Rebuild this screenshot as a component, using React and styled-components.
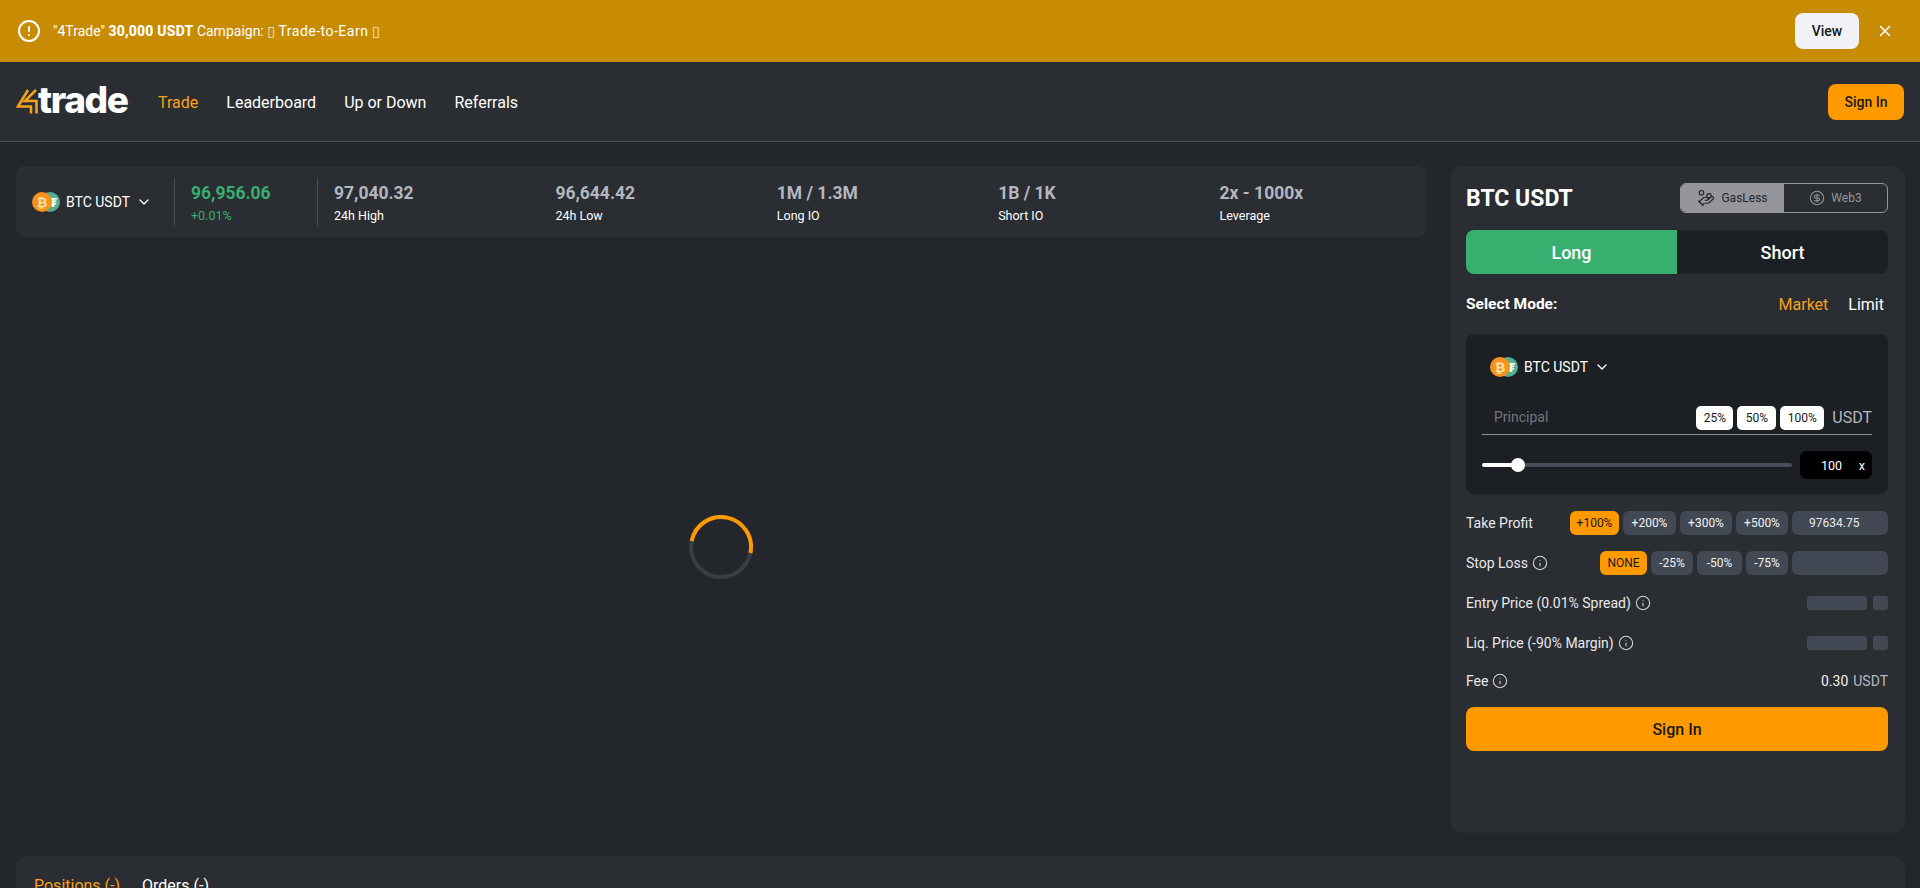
import React from "react";
import styled, { createGlobalStyle } from "styled-components";
import { CircleAlert, X, ChevronDown, Info, HandCoins, CircleDollarSign } from "lucide-react";

const FONT = `"Roboto", "Noto Sans", "DejaVu Sans", sans-serif`;

const Global = createGlobalStyle`
  html, body { margin: 0; padding: 0; height: 100%; background: #23262a; }
  body { font-family: ${FONT}; color: #fff; overflow: hidden; }
  * { box-sizing: border-box; }
`;

const Page = styled.div`
  width: 1920px;
  height: 888px;
  overflow: hidden;
  background: #23262a;
  display: flex;
  flex-direction: column;
`;

const Banner = styled.div`
  height: 62px;
  flex: none;
  background: #c88b04;
  display: flex;
  align-items: center;
  padding: 0 20px 0 17px;
`;
const BannerText = styled.div`
  margin-left: 12px;
  font-size: 14px;
  flex: 1;
  b { font-weight: 800; letter-spacing: 0.2px; }
`;
const Tofu = styled.span`
  font: 400 14px "DejaVu Sans", sans-serif;
  color: #f5e6c4;
`;
const CampaignWord = styled.span`
  letter-spacing: 0.5px;
`;
const ViewButton = styled.button`
  width: 64px;
  height: 36px;
  border: 0;
  border-radius: 8px;
  background: #f0f2f5;
  color: #15171b;
  font: 500 14px ${FONT};
`;
const CloseBtn = styled.span`
  display: flex;
  margin-left: 17px;
  margin-right: 6px;
  color: #fff;
`;

const Header = styled.header`
  height: 80px;
  flex: none;
  background: #2a2d32;
  border-bottom: 1px solid #4a4d54;
  display: flex;
  align-items: center;
  padding: 0 16px;
`;
const Logo = styled.div`
  display: flex;
  align-items: center;
  width: 142px;
`;
const LogoMark = styled.svg`
  flex: none;
`;
const LogoWord = styled.span`
  font: 800 37px/1 "Inter", sans-serif;
  letter-spacing: -1.4px;
  margin-left: -1px;
  color: #fff;
  transform: translateY(-2px);
`;
const Nav = styled.nav`
  display: flex;
  gap: 28px;
  flex: 1;
  padding-top: 2px;
`;
const NavLink = styled.a`
  font-size: 16px;
  color: ${p => (p.$active ? "#f7a11a" : "#fff")};
`;
const PrimarySmall = styled.button`
  width: 76px;
  height: 36px;
  margin-top: 1px;
  border: 0;
  border-radius: 8px;
  background: #ff9900;
  color: #17191d;
  font: 500 14px ${FONT};
`;

const Main = styled.main`
  flex: none;
  height: 691px;
  display: grid;
  grid-template-columns: 1410px 455px;
  gap: 24px;
  padding: 24px 15px 0 16px;
`;
const LeftColumn = styled.div`
  display: flex;
  flex-direction: column;
  min-height: 0;
`;
const StatBar = styled.section`
  height: 71px;
  flex: none;
  background: #2a2d32;
  border-radius: 8px;
  display: flex;
  align-items: center;
  padding: 0 16px;
`;
const Pair = styled.div`
  display: flex;
  align-items: center;
  gap: 6px;
  font-size: 14px;
  color: #fff;
`;
const PairGroup = styled.div`
  width: 142px;
  flex: none;
`;
const Divider = styled.div`
  width: 1px;
  height: 48px;
  background: #4a4d54;
  flex: none;
`;
const PriceBlock = styled.div`
  width: 142px;
  padding: 2px 0 0 16px;
  flex: none;
`;
const StatsGrid = styled.div`
  display: flex;
  flex: 1;
  padding: 2px 0 0 16px;
`;
const Stat = styled.div`
  width: 221.4px;
  flex: none;
`;
const StatValue = styled.div`
  font-size: 17.5px;
  line-height: 24px;
  font-weight: 700;
  color: ${p => (p.$green ? "#38ae6f" : "#b4b7c0")};
`;
const StatLabel = styled.div`
  font-size: 12.5px;
  line-height: 18px;
  margin-top: 2px;
  color: ${p => (p.$green ? "#38ae6f" : "#fff")};
`;
const ChartArea = styled.div`
  flex: 1;
  padding-top: 23px;
  display: flex;
  align-items: center;
  justify-content: center;
`;

const Panel = styled.aside`
  background: #2a2d32;
  border-radius: 12px;
  padding: 16px 17px 16px 16px;
  display: flex;
  flex-direction: column;
`;
const PanelHead = styled.div`
  display: flex;
  align-items: center;
  justify-content: space-between;
  height: 32px;
`;
const PanelTitle = styled.h2`
  margin: 0;
  font-size: 23px;
  font-weight: 700;
  color: #fff;
`;
const Toggle = styled.div`
  width: 208px;
  height: 30px;
  border: 1px solid #94969b;
  border-radius: 6px;
  display: grid;
  grid-template-columns: 103px 1fr;
  overflow: hidden;
`;
const ToggleItem = styled.div`
  display: flex;
  align-items: center;
  justify-content: center;
  gap: 6px;
  font-size: 12px;
  background: ${p => (p.$active ? "#94969b" : "transparent")};
  color: ${p => (p.$active ? "#24262b" : "#94969b")};
`;
const SideTabs = styled.div`
  margin-top: 16px;
  height: 44px;
  flex: none;
  display: grid;
  grid-template-columns: 1fr 1fr;
  border-radius: 8px;
  overflow: hidden;
  background: #1c1f24;
`;
const SideTab = styled.div`
  display: flex;
  align-items: center;
  justify-content: center;
  font-size: 18px;
  font-weight: 500;
  background: ${p => (p.$active ? "#38ae6f" : "transparent")};
`;
const ModeRow = styled.div`
  margin-top: 17px;
  height: 26px;
  display: flex;
  align-items: center;
  justify-content: space-between;
  padding-right: 4px;
`;
const ModeLabel = styled.div`
  font-size: 15.5px;
  font-weight: 700;
`;
const ModeOptions = styled.div`
  display: flex;
  gap: 20px;
`;
const ModeOption = styled.span`
  font-size: 16px;
  color: ${p => (p.$active ? "#f7a11a" : "#fff")};
`;
const InputCard = styled.div`
  margin-top: 17px;
  height: 160px;
  flex: none;
  background: #1c1f24;
  border-radius: 8px;
  padding: 23px 16px 0;
`;
const CardPair = styled(Pair)`
  padding-left: 8px;
  height: 20px;
`;
const PrincipalRow = styled.div`
  margin-top: 22px;
  height: 36px;
  border-bottom: 1px solid #8f9197;
  display: flex;
  align-items: flex-start;
  padding-top: 7px;
`;
const Placeholder = styled.div`
  flex: 1;
  font-size: 14px;
  line-height: 22px;
  padding-left: 12px;
  color: #74767c;
`;
const PercentButton = styled.button`
  height: 24px;
  width: ${p => p.$w}px;
  border: 0;
  padding: 0;
  margin-right: 4px;
  border-radius: 5px;
  background: #fff;
  color: #17191d;
  font: 400 12px ${FONT};
`;
const Unit = styled.span`
  font-size: 16px;
  line-height: 24px;
  margin-left: 4px;
  color: #b4b7c0;
`;
const SliderRow = styled.div`
  margin-top: 16px;
  display: flex;
  align-items: center;
  justify-content: space-between;
`;
const Track = styled.div`
  position: relative;
  width: 310px;
  height: 4px;
  border-radius: 2px;
  background: #4a4d5c;
`;
const TrackFill = styled.div`
  height: 100%;
  width: 36px;
  border-radius: 2px;
  background: #fff;
`;
const Thumb = styled.div`
  position: absolute;
  left: 29px;
  top: -5px;
  width: 14px;
  height: 14px;
  border-radius: 50%;
  background: #fff;
`;
const Leverage = styled.div`
  width: 72px;
  height: 28px;
  border-radius: 6px;
  background: #000;
  display: flex;
  align-items: center;
  justify-content: space-between;
  padding: 0 7px 0 21px;
  font-size: 12.5px;
`;
const FormRow = styled.div`
  height: 24px;
  margin-top: ${p => p.$mt ?? 16}px;
  display: flex;
  align-items: center;
  gap: 4px;
  font-size: 14px;
  color: #e8e9ec;
`;
const RowLabel = styled.span`
  flex: 1;
  display: flex;
  align-items: center;
  gap: 4px;
  svg { color: #d4d6da; }
`;
const ChoiceButton = styled.div`
  height: 24px;
  width: ${p => p.$w}px;
  border-radius: 6px;
  display: flex;
  align-items: center;
  justify-content: center;
  font-size: 12px;
  background: ${p => (p.$active ? "#ff9900" : "#434954")};
  color: ${p => (p.$active ? "#17191d" : "#f0f1f3")};
`;
const PriceInput = styled.div`
  width: 96px;
  height: 24px;
  border-radius: 6px;
  background: #434954;
  padding-left: 17px;
  font-size: 12px;
  line-height: 24px;
  color: #e8e9ec;
`;
const Skeleton = styled.div`
  width: ${p => p.$w}px;
  height: 14px;
  margin-left: 2px;
  border-radius: 3px;
  background: #434954;
`;
const FeeValue = styled.span`
  color: #f0f1f3;
  span { color: #b4b7c0; margin-left: 5px; }
`;
const SubmitButton = styled.button`
  margin-top: 14px;
  height: 44px;
  flex: none;
  border: 0;
  border-radius: 8px;
  background: #ff9900;
  color: #17191d;
  font: 500 16px ${FONT};
`;
const BottomPanel = styled.section`
  margin: 23px 15px 0 16px;
  height: 200px;
  flex: none;
  background: #2a2d32;
  border-radius: 12px 12px 0 0;
  padding: 20px 18px;
  display: flex;
  gap: 22px;
`;
const BottomTab = styled.span`
  font-size: 16px;
  line-height: 20px;
  color: ${p => (p.$active ? "#f7a11a" : "#fff")};
`;

const PairIcon = () => (
  <svg width="28" height="20" viewBox="0 0 28 20">
    <circle cx="18" cy="10" r="10" fill="#53ae94" />
    <text x="17" y="14.5" fontSize="13" fontWeight="700" fill="#fff" fontFamily="Roboto, sans-serif">₮</text>
    <circle cx="10" cy="10" r="10" fill="#f7931a" />
    <text x="10" y="14.5" textAnchor="middle" fontSize="13" fontWeight="700" fill="#ffe3b8" fontFamily="DejaVu Sans, sans-serif">₿</text>
  </svg>
);

const Spinner = () => (
  <svg width="64" height="64" viewBox="0 0 64 64">
    <circle cx="32" cy="32" r="30" fill="none" stroke="#3a3d44" strokeWidth="4" />
    <path d="M2.6 26 A30 30 0 0 1 61.4 38" fill="none" stroke="#ff9900" strokeWidth="4" />
  </svg>
);

const InfoIcon = () => <Info size={16} strokeWidth={1.6} />;

const stats = [
  ["97,040.32", "24h High"],
  ["96,644.42", "24h Low"],
  ["1M / 1.3M", "Long IO"],
  ["1B / 1K", "Short IO"],
  ["2x - 1000x", "Leverage"],
];

export default function App() {
  return (
    <Page>
      <Global />
      <Banner>
        <CircleAlert size={24} strokeWidth={2} color="#fff" />
        <BannerText>
          "4Trade" <b>30,000 USDT</b> Campaign: <Tofu>▯</Tofu> <CampaignWord>Trade-to-Earn</CampaignWord> <Tofu>▯</Tofu>
        </BannerText>
        <ViewButton>View</ViewButton>
        <CloseBtn><X size={18} strokeWidth={2} /></CloseBtn>
      </Banner>
      <Header>
        <Logo>
          <LogoMark width="23" height="25" viewBox="0 0 23 25">
            <path d="M12 1 L2 17.5 H15 V24.5" fill="none" stroke="#f7a11a" strokeWidth="2.6" />
            <path d="M20 1 L9 12 H20.5 V24.5" fill="none" stroke="#f7a11a" strokeWidth="2.6" />
          </LogoMark>
          <LogoWord>trade</LogoWord>
        </Logo>
        <Nav>
          <NavLink $active>Trade</NavLink>
          <NavLink>Leaderboard</NavLink>
          <NavLink>Up or Down</NavLink>
          <NavLink>Referrals</NavLink>
        </Nav>
        <PrimarySmall>Sign In</PrimarySmall>
      </Header>
      <Main>
        <LeftColumn>
          <StatBar>
            <PairGroup>
              <Pair><PairIcon /> BTC USDT <ChevronDown size={16} strokeWidth={2} /></Pair>
            </PairGroup>
            <Divider />
            <PriceBlock>
              <StatValue $green>96,956.06</StatValue>
              <StatLabel $green>+0.01%</StatLabel>
            </PriceBlock>
            <Divider />
            <StatsGrid>
              {stats.map(([v, l]) => (
                <Stat key={l}>
                  <StatValue>{v}</StatValue>
                  <StatLabel>{l}</StatLabel>
                </Stat>
              ))}
            </StatsGrid>
          </StatBar>
          <ChartArea><Spinner /></ChartArea>
        </LeftColumn>
        <Panel>
          <PanelHead>
            <PanelTitle>BTC USDT</PanelTitle>
            <Toggle>
              <ToggleItem $active><HandCoins size={18} strokeWidth={1.6} /> GasLess</ToggleItem>
              <ToggleItem><CircleDollarSign size={16} strokeWidth={1.6} /> Web3</ToggleItem>
            </Toggle>
          </PanelHead>
          <SideTabs>
            <SideTab $active>Long</SideTab>
            <SideTab>Short</SideTab>
          </SideTabs>
          <ModeRow>
            <ModeLabel>Select Mode:</ModeLabel>
            <ModeOptions>
              <ModeOption $active>Market</ModeOption>
              <ModeOption>Limit</ModeOption>
            </ModeOptions>
          </ModeRow>
          <InputCard>
            <CardPair><PairIcon /> BTC USDT <ChevronDown size={16} strokeWidth={2} /></CardPair>
            <PrincipalRow>
              <Placeholder>Principal</Placeholder>
              <PercentButton $w={37}>25%</PercentButton>
              <PercentButton $w={39}>50%</PercentButton>
              <PercentButton $w={44}>100%</PercentButton>
              <Unit>USDT</Unit>
            </PrincipalRow>
            <SliderRow>
              <Track><TrackFill /><Thumb /></Track>
              <Leverage><span>100</span><span>x</span></Leverage>
            </SliderRow>
          </InputCard>
          <FormRow $mt={17}>
            <RowLabel>Take Profit</RowLabel>
            <ChoiceButton $w={49} $active>+100%</ChoiceButton>
            <ChoiceButton $w={53}>+200%</ChoiceButton>
            <ChoiceButton $w={52}>+300%</ChoiceButton>
            <ChoiceButton $w={52}>+500%</ChoiceButton>
            <PriceInput>97634.75</PriceInput>
          </FormRow>
          <FormRow>
            <RowLabel>Stop Loss <InfoIcon /></RowLabel>
            <ChoiceButton $w={47} $active>NONE</ChoiceButton>
            <ChoiceButton $w={42}>-25%</ChoiceButton>
            <ChoiceButton $w={45}>-50%</ChoiceButton>
            <ChoiceButton $w={42}>-75%</ChoiceButton>
            <PriceInput />
          </FormRow>
          <FormRow>
            <RowLabel>Entry Price (0.01% Spread) <InfoIcon /></RowLabel>
            <Skeleton $w={60} />
            <Skeleton $w={15} />
          </FormRow>
          <FormRow>
            <RowLabel>Liq. Price (-90% Margin) <InfoIcon /></RowLabel>
            <Skeleton $w={60} />
            <Skeleton $w={15} />
          </FormRow>
          <FormRow $mt={14}>
            <RowLabel>Fee <InfoIcon /></RowLabel>
            <FeeValue>0.30<span>USDT</span></FeeValue>
          </FormRow>
          <SubmitButton>Sign In</SubmitButton>
        </Panel>
      </Main>
      <BottomPanel>
        <BottomTab $active>Positions (-)</BottomTab>
        <BottomTab>Orders (-)</BottomTab>
      </BottomPanel>
    </Page>
  );
}
